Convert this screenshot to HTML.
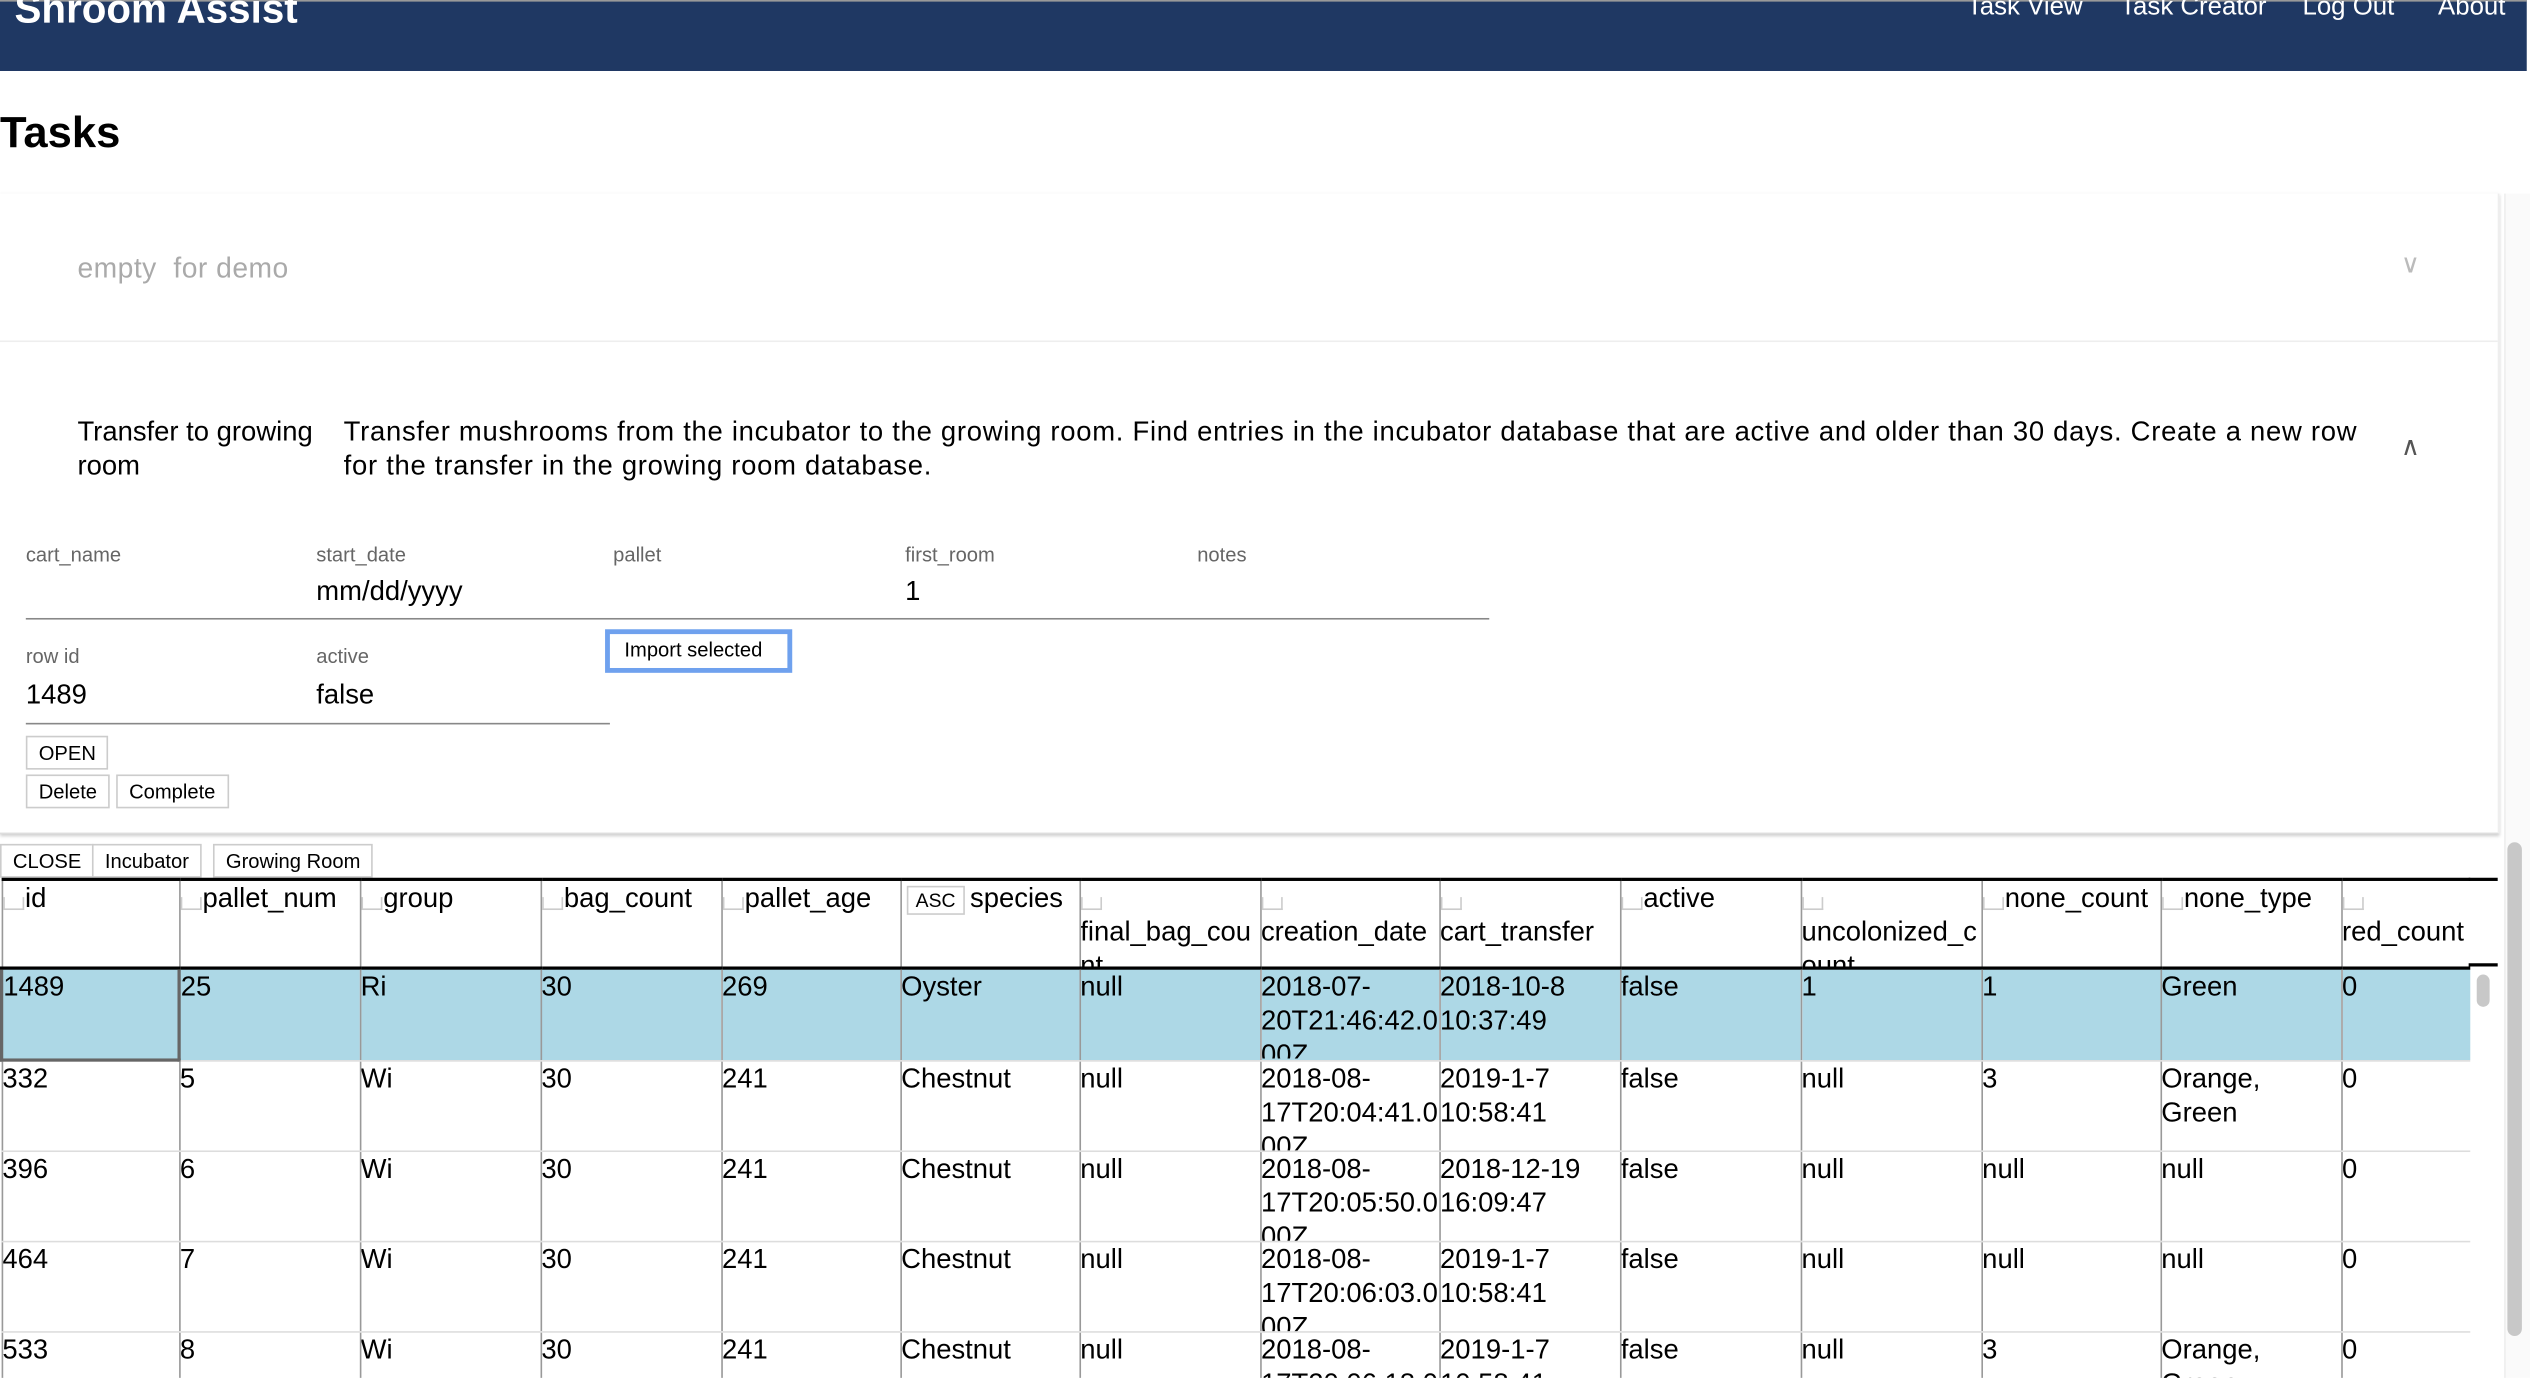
<!DOCTYPE html>
<html><head><meta charset="utf-8"><style>
html,body{margin:0;padding:0;background:#fff;overflow:hidden}
body{width:2530px;height:1378px}
#w{position:absolute;left:0;top:0;width:1568px;height:854px;transform:scale(1.6135);transform-origin:0 0;font-family:"Liberation Sans",sans-serif;color:#000;overflow:hidden}
.a{position:absolute;white-space:nowrap}
.nav{left:0;top:0;width:1566px;height:43px;background:#1f3863;border-top:1px solid #999}
.btn{position:absolute;border:1px solid #ccc;background:#fff;font-size:12.5px;padding:2px 7px;box-sizing:border-box;height:21px;line-height:16px}
.lbl{font-size:12.5px;color:#666}
.val{font-size:17px}
table{position:absolute;left:0;top:544px;border-collapse:collapse;table-layout:fixed;width:1530px;font-size:17px}
td,th{border-left:1px solid #999;border-bottom:1px solid #ddd;vertical-align:top;padding:0;text-align:left;font-weight:normal;overflow:hidden;line-height:21px;white-space:normal;word-break:normal;overflow-wrap:anywhere}
th{height:53px;border-top:2px solid #000;border-bottom:2px solid #000;background:#fff}
td div,th div{height:55px;overflow:hidden}
th div{height:53px}
.sel td{background:#add8e6}
.cb{display:inline-block;width:11px;height:7px;border:1px solid #ccc;border-top:none;margin-right:1px;vertical-align:-2px}
</style></head><body><div id="w">
<div class="a nav"></div>
<div class="a" style="left:9px;top:-8px;color:#fff;font-size:25px;font-weight:bold">Shroom Assist</div>
<div class="a" style="left:1219px;top:-4px;color:#fff;font-size:16px">Task View</div>
<div class="a" style="left:1314px;top:-4px;color:#fff;font-size:16px">Task Creator</div>
<div class="a" style="left:1427px;top:-4px;color:#fff;font-size:16px">Log Out</div>
<div class="a" style="left:1511px;top:-4px;color:#fff;font-size:16px">About</div>
<div class="a" style="left:0;top:67px;font-size:27px;font-weight:bold">Tasks</div>
<div class="a" style="left:0;top:120px;width:1548px;height:396px;border-right:1px solid #eee;border-bottom:1px solid #ddd;box-shadow:0 1px 2px #ccc"></div>
<div class="a" style="left:0;top:211px;width:1548px;height:1px;background:#eee"></div>
<div class="a" style="left:48px;top:156px;font-size:17.5px;color:#aaa;letter-spacing:0.3px">empty&nbsp; for demo</div>
<div class="a" style="left:1488px;top:154px;font-size:16px;color:#bbb">&#8744;</div>
<div class="a" style="left:48px;top:257px;font-size:17px;line-height:21px">Transfer to growing<br>room</div>
<div class="a" style="left:213px;top:257px;font-size:17px;line-height:21px;letter-spacing:0.45px">Transfer mushrooms from the incubator to the growing room. Find entries in the incubator database that are active and older than 30 days. Create a new row<br>for the transfer in the growing room database.</div>
<div class="a" style="left:1488px;top:267px;font-size:16px;color:#555">&#8743;</div>
<div class="a lbl" style="left:16px;top:337px">cart_name</div>
<div class="a lbl" style="left:196px;top:337px">start_date</div>
<div class="a lbl" style="left:380px;top:337px">pallet</div>
<div class="a lbl" style="left:561px;top:337px">first_room</div>
<div class="a lbl" style="left:742px;top:337px">notes</div>
<div class="a val" style="left:196px;top:357px">mm/dd/yyyy</div>
<div class="a val" style="left:561px;top:357px">1</div>
<div class="a" style="left:16px;top:383px;width:907px;height:1px;background:#888"></div>
<div class="btn" style="left:375px;top:390px;width:116px;height:27px;border:3px solid #6fa1ee;padding:2px 9px;line-height:17px">Import selected</div>
<div class="a lbl" style="left:16px;top:400px">row id</div>
<div class="a lbl" style="left:196px;top:400px">active</div>
<div class="a val" style="left:16px;top:421px">1489</div>
<div class="a val" style="left:196px;top:421px">false</div>
<div class="a" style="left:16px;top:448px;width:362px;height:1px;background:#888"></div>
<div class="btn" style="left:16px;top:456px">OPEN</div>
<div class="btn" style="left:16px;top:480px">Delete</div>
<div class="btn" style="left:72px;top:480px">Complete</div>
<div class="btn" style="left:0;top:523px">CLOSE</div>
<div class="btn" style="left:57px;top:523px">Incubator</div>
<div class="btn" style="left:132px;top:523px">Growing Room</div>
<table>
<colgroup><col style="width:110px"><col style="width:112px"><col style="width:112px"><col style="width:112px"><col style="width:111px"><col style="width:111px"><col style="width:112px"><col style="width:111px"><col style="width:112px"><col style="width:112px"><col style="width:112px"><col style="width:111px"><col style="width:112px"><col style="width:80px"></colgroup>
<tr><th><div><span class="cb"></span>id</div></th><th><div><span class="cb"></span>pallet_num</div></th><th><div><span class="cb"></span>group</div></th><th><div><span class="cb"></span>bag_count</div></th><th><div><span class="cb"></span>pallet_age</div></th><th><div><span style="font-size:12px;border:1px solid #ccc;padding:1px 5px;margin:0 3px">ASC</span>species</div></th><th><div><span class="cb"></span><br>final_bag_count</div></th><th><div><span class="cb"></span><br>creation_date</div></th><th><div><span class="cb"></span><br>cart_transfer</div></th><th><div><span class="cb"></span>active</div></th><th><div><span class="cb"></span><br>uncolonized_count</div></th><th><div><span class="cb"></span>none_count</div></th><th><div><span class="cb"></span>none_type</div></th><th><div><span class="cb"></span>red_count</div></th></tr>
<tr class="sel"><td style="border:2px solid #666"><div>1489</div></td><td><div>25</div></td><td><div>Ri</div></td><td><div>30</div></td><td><div>269</div></td><td><div>Oyster</div></td><td><div>null</div></td><td><div>2018-07-20T21:46:42.000Z</div></td><td><div>2018-10-8 10:37:49</div></td><td><div>false</div></td><td><div>1</div></td><td><div>1</div></td><td><div>Green</div></td><td><div>0</div></td></tr>
<tr><td><div>332</div></td><td><div>5</div></td><td><div>Wi</div></td><td><div>30</div></td><td><div>241</div></td><td><div>Chestnut</div></td><td><div>null</div></td><td><div>2018-08-17T20:04:41.000Z</div></td><td><div>2019-1-7 10:58:41</div></td><td><div>false</div></td><td><div>null</div></td><td><div>3</div></td><td><div>Orange, Green</div></td><td><div>0</div></td></tr>
<tr><td><div>396</div></td><td><div>6</div></td><td><div>Wi</div></td><td><div>30</div></td><td><div>241</div></td><td><div>Chestnut</div></td><td><div>null</div></td><td><div>2018-08-17T20:05:50.000Z</div></td><td><div>2018-12-19 16:09:47</div></td><td><div>false</div></td><td><div>null</div></td><td><div>null</div></td><td><div>null</div></td><td><div>0</div></td></tr>
<tr><td><div>464</div></td><td><div>7</div></td><td><div>Wi</div></td><td><div>30</div></td><td><div>241</div></td><td><div>Chestnut</div></td><td><div>null</div></td><td><div>2018-08-17T20:06:03.000Z</div></td><td><div>2019-1-7 10:58:41</div></td><td><div>false</div></td><td><div>null</div></td><td><div>null</div></td><td><div>null</div></td><td><div>0</div></td></tr>
<tr><td><div>533</div></td><td><div>8</div></td><td><div>Wi</div></td><td><div>30</div></td><td><div>241</div></td><td><div>Chestnut</div></td><td><div>null</div></td><td><div>2018-08-17T20:06:18.000Z</div></td><td><div>2019-1-7 10:58:41</div></td><td><div>false</div></td><td><div>null</div></td><td><div>3</div></td><td><div>Orange, Green</div></td><td><div>0</div></td></tr>
</table>
<div class="a" style="left:1530px;top:544px;width:18px;height:2px;background:#000"></div>
<div class="a" style="left:1530px;top:597px;width:18px;height:2px;background:#000"></div>
<div class="a" style="left:1535px;top:604px;width:8px;height:20px;border-radius:4px;background:#c8c8c8"></div>
<div class="a" style="left:1552px;top:120px;width:16px;height:734px;background:#fafafa;border-left:1px solid #eee"></div>
<div class="a" style="left:1554px;top:522px;width:9px;height:306px;border-radius:5px;background:#c8c8c8"></div>
</div></body></html>
